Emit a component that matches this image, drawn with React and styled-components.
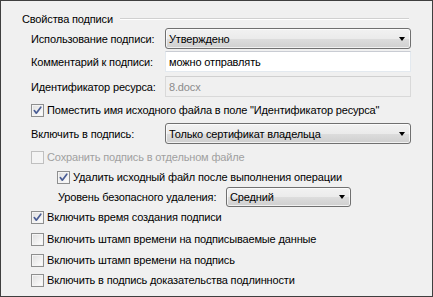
import React from "react";
import styled, { createGlobalStyle } from "styled-components";

const Global = createGlobalStyle`
  html, body { margin: 0; padding: 0; background: #f0f0f0; }
  * { box-sizing: border-box; }
`;

const Frame = styled.div`
  width: 433px;
  height: 297px;
  border: 1px solid #3f3f3f;
  background: #f0f0f0;
  padding: 8px 21px 0 21px;
  font-family: "Liberation Sans", Arial, sans-serif;
  font-size: 11px;
  letter-spacing: -0.15px;
  color: #000;
  display: flex;
  flex-direction: column;
`;

const Header = styled.div`
  height: 19px;
  display: flex;
  align-items: center;
  gap: 7px;
  margin-right: 2px;
`;

const HeaderLine = styled.div`
  flex: 1;
  height: 2px;
  border-top: 1px solid #d0d0d0;
  border-bottom: 1px solid #ffffff;
`;

const Body = styled.div`
  padding-left: 9px;
  display: flex;
  flex-direction: column;
`;

const Row = styled.div`
  height: ${(p) => p.$h || 20}px;
  margin-top: ${(p) => p.$mt || 0}px;
  margin-left: ${(p) => p.$indent || 0}px;
  display: flex;
  align-items: center;
`;

const FieldRow = styled.div`
  height: ${(p) => p.$h || 21}px;
  margin-top: ${(p) => p.$mt || 0}px;
  margin-left: ${(p) => p.$indent || 0}px;
  display: grid;
  grid-template-columns: ${(p) => p.$cols || "134px 1fr"};
  align-items: center;
`;

const Label = styled.span`
  color: ${(p) => (p.$disabled ? "#a0a0a0" : "#000")};
  white-space: nowrap;
`;

const Select = styled.div`
  height: ${(p) => p.$h || 21}px;
  border: 1px solid #707070;
  border-radius: 3px;
  background: linear-gradient(#f2f2f2 0%, #ebebeb 50%, #dddddd 51%, #cfcfcf 100%);
  box-shadow: inset 0 0 0 1px rgba(255, 255, 255, 0.7);
  display: flex;
  align-items: center;
  padding-left: 3px;
  padding-right: 5px;
  justify-content: space-between;
`;

const Arrow = styled.span`
  width: 0;
  height: 0;
  border-left: 3.5px solid transparent;
  border-right: 3.5px solid transparent;
  border-top: 4px solid #000;
`;

const Input = styled.div`
  height: 21px;
  border: 1px solid ${(p) => (p.$disabled ? "#d9d9d9" : "#e3e9ef")};
  border-top-color: ${(p) => (p.$disabled ? "#d0d0d0" : "#c9ccd3")};
  background: ${(p) => (p.$disabled ? "#f0f0f0" : "#ffffff")};
  color: ${(p) => (p.$disabled ? "#8c8c8c" : "#000")};
  display: flex;
  align-items: center;
  padding-left: 3px;
`;

const Box = styled.span`
  width: 13px;
  height: 13px;
  flex: none;
  border: 1px solid ${(p) => (p.$disabled ? "#c0c0c0" : "#8e8f8f")};
  background: ${(p) =>
    p.$disabled
      ? "#f4f4f4"
      : "linear-gradient(135deg, #dedede 0%, #f2f2f2 60%, #ffffff 100%)"};
  box-shadow: inset 0 0 0 1px #f4f4f4;
  margin-right: 3px;
  display: flex;
  align-items: center;
  justify-content: center;
`;

function Check({ checked, disabled, children, indent, mt }) {
  return (
    <Row $indent={indent} $mt={mt}>
      <Box $disabled={disabled}>
        {checked && (
          <svg width="11" height="11" viewBox="0 0 11 11">
            <path
              d="M2.3 5.6 L4.3 8.2 L8.8 2.2"
              fill="none"
              stroke="#4a5d95"
              strokeWidth="1.7"
              strokeLinecap="round"
              strokeLinejoin="round"
            />
          </svg>
        )}
      </Box>
      <Label $disabled={disabled}>{children}</Label>
    </Row>
  );
}

export default function App() {
  return (
    <>
      <Global />
      <Frame>
        <Header>
          <Label>Свойства подписи</Label>
          <HeaderLine />
        </Header>
        <Body>
          <FieldRow>
            <Label>Использование подписи:</Label>
            <Select>
              <span>Утверждено</span>
              <Arrow />
            </Select>
          </FieldRow>
          <FieldRow $mt={2}>
            <Label>Комментарий к подписи:</Label>
            <Input>можно отправлять</Input>
          </FieldRow>
          <FieldRow $mt={4}>
            <Label>Идентификатор ресурса:</Label>
            <Input $disabled>8.docx</Input>
          </FieldRow>
          <Check checked mt={3}>
            Поместить имя исходного файла в поле "Идентификатор ресурса"
          </Check>
          <FieldRow $mt={3}>
            <Label>Включить в подпись:</Label>
            <Select>
              <span>Только сертификат владельца</span>
              <Arrow />
            </Select>
          </FieldRow>
          <Check disabled mt={3}>
            Сохранить подпись в отдельном файле
          </Check>
          <Check checked indent={26}>
            Удалить исходный файл после выполнения операции
          </Check>
          <FieldRow $indent={27} $h={20} $cols="168px 125px">
            <Label>Уровень безопасного удаления:</Label>
            <Select $h={20}>
              <span>Средний</span>
              <Arrow />
            </Select>
          </FieldRow>
          <Check checked>Включить время создания подписи</Check>
          <Check mt={2}>Включить штамп времени на подписываемые данные</Check>
          <Check mt={1}>Включить штамп времени на подпись</Check>
          <Check>Включить в подпись доказательства подлинности</Check>
        </Body>
      </Frame>
    </>
  );
}
